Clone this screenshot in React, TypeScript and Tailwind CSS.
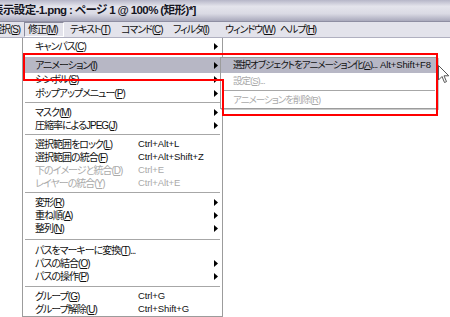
import React from "react";

type Item =
  | { sep: true; h: number }
  | {
      sep?: false;
      label: string;
      key: string;
      tail?: string;
      shortcut?: string;
      arrow?: boolean;
      disabled?: boolean;
      active?: boolean;
      h: number;
      mt?: number;
    };

const mainItems: Item[] = [
  { label: "キャンパス(", key: "C", tail: ")", arrow: true, h: 15 },
  { label: "アニメーション(", key: "I", tail: ")", arrow: true, active: true, h: 16, mt: 3 },
  { label: "シンボル(", key: "S", tail: ")", arrow: true, h: 13 },
  { label: "ポップアップメニュー(", key: "P", tail: ")", arrow: true, h: 14 },
  { sep: true, h: 6 },
  { label: "マスク(", key: "M", tail: ")", arrow: true, h: 13 },
  { label: "圧縮率によるJPEG(", key: "J", tail: ")", arrow: true, h: 13 },
  { sep: true, h: 6 },
  { label: "選択範囲をロック(", key: "L", tail: ")", shortcut: "Ctrl+Alt+L", h: 13 },
  { label: "選択範囲の統合(", key: "F", tail: ")", shortcut: "Ctrl+Alt+Shift+Z", h: 13 },
  { label: "下のイメージと統合(", key: "D", tail: ")", shortcut: "Ctrl+E", disabled: true, h: 13 },
  { label: "レイヤーの統合(", key: "Y", tail: ")", shortcut: "Ctrl+Alt+E", disabled: true, h: 13 },
  { sep: true, h: 6 },
  { label: "変形(", key: "R", tail: ")", arrow: true, h: 13 },
  { label: "重ね順(", key: "A", tail: ")", arrow: true, h: 13 },
  { label: "整列(", key: "N", tail: ")", arrow: true, h: 13 },
  { sep: true, h: 9 },
  { label: "パスをマーキーに変換(", key: "T", tail: ")...", h: 13 },
  { label: "パスの結合(", key: "O", tail: ")", arrow: true, h: 13 },
  { label: "パスの操作(", key: "P", tail: ")", arrow: true, h: 13 },
  { sep: true, h: 7 },
  { label: "グループ(", key: "G", tail: ")", shortcut: "Ctrl+G", h: 13 },
  { label: "グループ解除(", key: "U", tail: ")", shortcut: "Ctrl+Shift+G", h: 13 },
];

// widths/paddings line the menu titles up with the screenshot
const menuBar = [
  { label: "選択(", key: "S", cls: "w-[22px] justify-end overflow-hidden pr-[2px]" },
  { label: "修正(", key: "M", cls: "w-[40px] ml-[2px] pl-[3px] border border-t-[#8a8a9c] border-l-[#8a8a9c] border-r-white border-b-white" },
  { label: "テキスト(", key: "T", cls: "w-[53px] pl-[6px]" },
  { label: "コマンド(", key: "C", cls: "w-[51px] pl-[4px]" },
  { label: "フィルタ(", key: "I", cls: "w-[50px] pl-[5px]" },
  { label: "ウィンドウ(", key: "W", cls: "w-[55px] pl-[7px]" },
  { label: "ヘルプ(", key: "H", cls: "w-[50px] pl-[7px]" },
];

function Arrow() {
  return (
    <svg width="4" height="7" viewBox="0 0 4 7" className="shrink-0">
      <path d="M0 0 L4 3.5 L0 7 Z" fill="#000" />
    </svg>
  );
}

function Row({ item, textW }: { item: Item; textW?: number }) {
  if (item.sep) {
    return (
      <div className="flex items-center px-[2px]" style={{ height: item.h }}>
        <div className="w-full h-[2px] border-t border-[#a7a7a7] border-b border-b-white" />
      </div>
    );
  }
  const color = item.disabled ? "text-[#aaaaaa]" : "text-[#111]";
  return (
    <div
      className={`flex items-center pl-[12px] pr-[4px] ${item.active ? "bg-[#b7b7c5]" : ""} ${color}`}
      style={{ height: item.h, marginTop: item.mt ?? 0 }}
    >
      <span className="shrink-0 whitespace-nowrap" style={textW ? { width: textW } : undefined}>
        {item.label}
        <u>{item.key}</u>
        {item.tail}
      </span>
      <span
        className={`whitespace-nowrap text-[9.5px] tracking-[-0.1px] ${textW ? "flex-1" : "ml-auto pr-[2px]"}`}
      >
        {item.shortcut}
      </span>
      {item.arrow && <Arrow />}
    </div>
  );
}

export default function App() {
  return (
    <div className="relative w-[450px] h-[317px] overflow-hidden bg-white font-['Liberation_Sans','Noto_Sans_CJK_JP',sans-serif] [font-feature-settings:'palt']">
      {/* title bar */}
      <div className="h-[22px] flex items-center bg-[linear-gradient(#b6b6c8_0%,#e4e4ec_30%,#dadae4_65%,#a9a9bc_100%)] border-b border-[#8e8ea2]">
        <span className="ml-[-8px] text-[11.5px] font-bold text-[#15151f] whitespace-nowrap tracking-[-0.6px]">
          表示設定-1.png : ページ 1 @ 100% (矩形)*]
        </span>
      </div>

      {/* menu bar */}
      <div className="h-[16px] flex items-center bg-[#e3e3eb] border-b border-[#b0b0c0] text-[10px] tracking-[-1.1px] text-[#111]">
        {menuBar.map((m, i) => (
          <div key={i} className={`h-[15px] shrink-0 flex items-center whitespace-nowrap ${m.cls}`}>
            <span>
              {m.label}
              <u>{m.key}</u>)
            </span>
          </div>
        ))}
      </div>

      {/* dropdown */}
      <div className="ml-[22px] w-[201px] text-[10px] tracking-[-1px] bg-white border-x border-b border-[#9c9c9c] pt-[1px]">
        {mainItems.map((it, i) => (
          <Row key={i} item={it} textW={103} />
        ))}
      </div>

      {/* submenu */}
      <div className="absolute left-[220px] top-[57px] w-[218px] text-[9.5px] tracking-[-1px] bg-white border border-[#9c9c9c] shadow-[1px_1px_0_#c8c8c8]">
        <Row
          item={{ label: "選択オブジェクトをアニメーション化(", key: "A", tail: ")...", shortcut: "Alt+Shift+F8", active: true, h: 15 }}
        />
        <Row item={{ label: "設定(", key: "S", tail: ")...", disabled: true, h: 16 }} />
        <Row item={{ sep: true, h: 4 }} />
        <Row item={{ label: "アニメーションを削除(", key: "R", tail: ")", disabled: true, h: 14 }} />
        <div className="h-[1px]" />
      </div>

      {/* annotation outline */}
      <svg className="absolute left-0 top-0 pointer-events-none" width="450" height="317">
        <path d="M24 54 H437 V115 H223 V80 H24 Z" fill="none" stroke="#f00" strokeWidth="2" />
      </svg>

      {/* mouse cursor */}
      <svg className="absolute left-[438px] top-[65px] pointer-events-none" width="12" height="19" viewBox="0 0 12 19">
        <path d="M0.5 0.5 L0.5 15 L4 11.5 L6.5 17.5 L8.5 16.6 L6 10.8 L10.8 10.8 Z" fill="#fff" stroke="#555" strokeWidth="1" />
      </svg>
    </div>
  );
}
